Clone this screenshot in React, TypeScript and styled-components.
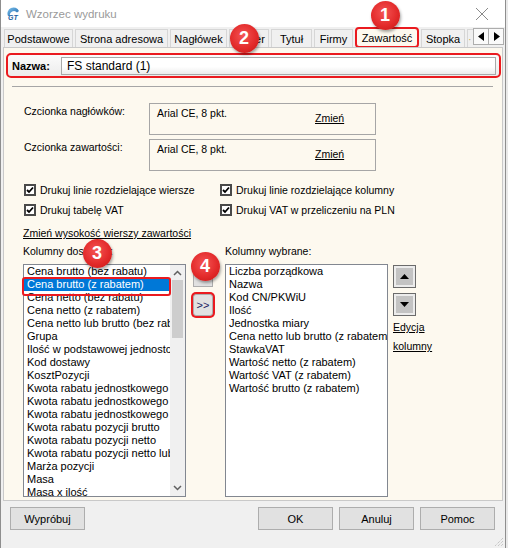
import React from 'react';
import styled, { createGlobalStyle, css } from 'styled-components';

const RED = '#ea1a1f';
const CREAM = '#fdf9ef';

const Global = createGlobalStyle`
  html, body { margin: 0; padding: 0; background: #e9e9e9; }
  body { font-family: "Liberation Sans", Arial, sans-serif; color: #000; }
  #root { width: 508px; height: 548px; overflow: hidden; }
`;

const Window = styled.div`
  position: relative;
  width: 504px;
  height: 548px;
  background: #f0f0f0;
  border-left: 1px solid #8e8e8e;
  border-right: 1px solid #8e8e8e;
  display: flex;
  flex-direction: column;
  overflow: hidden;
`;

const TitleBar = styled.div`
  height: 27px;
  flex: none;
  background: #fff;
  display: flex;
  align-items: center;
  padding-left: 5px;
`;

const Title = styled.span`
  margin-left: 5px;
  font-size: 11.5px;
  color: #9a9a9a;
  flex: 1;
`;

const CloseBtn = styled.div`
  width: 46px;
  height: 27px;
  display: flex;
  align-items: center;
  justify-content: center;
`;

const TabStrip = styled.div`
  height: 20px;
  flex: none;
  display: flex;
  align-items: flex-end;
  padding-left: 3px;
  position: relative;
  overflow: hidden;
`;

const Tab = styled.div<{ $w: number; $active?: boolean; $last?: boolean }>`
  box-sizing: border-box;
  width: ${p => p.$w}px;
  height: 18px;
  margin-right: ${p => (p.$last ? 0 : 2)}px;
  flex: none;
  display: flex;
  align-items: center;
  justify-content: ${p => (p.$last ? 'flex-start' : 'center')};
  font-size: 11px;
  border: 1px solid #d6d6d6;
  border-bottom: none;
  border-right: ${p => (p.$last ? 'none' : '1px solid #d6d6d6')};
  background: #f0f0f0;
  white-space: nowrap;
  overflow: hidden;
  color: ${p => (p.$last ? '#c8b060' : '#000')};
  ${p => p.$active && css`
    height: 21px;
    border: 2px solid ${RED};
    border-radius: 4px;
    background: ${CREAM};
    position: relative;
    z-index: 2;
    margin-bottom: -1px;
  `}
`;

const TabArrows = styled.div`
  flex: none;
  margin-left: auto;
  margin-right: 1px;
  margin-bottom: 2px;
  display: flex;
  background: #f0f0f0;
  position: relative;
  z-index: 1;
`;

const ArrowBtn = styled.div`
  width: 16px;
  height: 17px;
  box-sizing: border-box;
  border: 1px solid #adadad;
  margin-left: -1px;
  background: #fafafa;
  display: flex;
  align-items: center;
  justify-content: center;
`;

const Panel = styled.div`
  flex: 1;
  margin: 0 2px 0 2px;
  border: 1px solid #c9c9c9;
  background: ${CREAM};
  display: flex;
  flex-direction: column;
  min-height: 0;
`;

const NameGroup = styled.div`
  margin: 5px 1px 0 2px;
  height: 25px;
  box-sizing: border-box;
  border: 2px solid ${RED};
  border-radius: 5px;
  background: linear-gradient(#fbfbfb, #ececec);
  display: flex;
  align-items: center;
  padding: 0 3px 0 4px;
`;

const NameLabel = styled.span`
  font-weight: bold;
  font-size: 11px;
  width: 49px;
  flex: none;
`;

const NameInput = styled.div`
  flex: 1;
  height: 18px;
  box-sizing: border-box;
  border: 1px solid #a9a9a9;
  background: linear-gradient(#ffffff 55%, #ececec);
  font-size: 12px;
  display: flex;
  align-items: center;
  padding-left: 5px;
`;

const Separator = styled.div`
  margin: 8px 9px 0 8px;
  height: 1px;
  background: #a6a6a6;
`;

const FontRow = styled.div<{ $top: number }>`
  margin-top: ${p => p.$top}px;
  display: grid;
  grid-template-columns: 125px 227px;
  padding-left: 20px;
`;

const Label = styled.span`
  font-size: 10.5px;
  line-height: 13px;
`;

const FontLabel = styled(Label)`
  padding-top: 2px;
`;

const FontBox = styled.div`
  height: 32px;
  box-sizing: border-box;
  border: 1px solid #a6a6a6;
  display: grid;
  grid-template-columns: 158px 1fr;
  padding: 3px 0 0 7px;
  font-size: 10.5px;
  line-height: 13px;
`;

const LinkText = styled.span<{ $top?: number }>`
  text-decoration: underline;
  font-size: 10.5px;
  line-height: 13px;
  margin-top: ${p => p.$top ?? 0}px;
  display: inline-block;
`;

const CheckGrid = styled.div`
  margin-top: 13px;
  padding-left: 20px;
  display: grid;
  grid-template-columns: 196px 1fr;
  row-gap: 8px;
`;

const CheckItem = styled.div`
  display: flex;
  align-items: center;
  gap: 4px;
  height: 12px;
  font-size: 10.5px;
`;

const Box = styled.span`
  width: 12px;
  height: 12px;
  box-sizing: border-box;
  border: 2px solid #4a4a4a;
  background: #fff;
  display: inline-flex;
  align-items: center;
  justify-content: center;
  flex: none;
`;

const LinkRow = styled.div`
  margin-top: 7px;
  padding-left: 19px;
`;

const Columns = styled.div`
  margin-top: 4px;
  padding-left: 19px;
  display: grid;
  grid-template-columns: 163px 39px 163px 1fr;
  grid-template-rows: 13px 233px;
  row-gap: 6px;
`;

const ColLabel = styled(Label)``;

const ListFrame = styled.div`
  position: relative;
  box-sizing: border-box;
  border: 1px solid #828790;
  background: #fff;
  display: flex;
`;

const Items = styled.div`
  flex: 1;
  min-width: 0;
  overflow: hidden;
`;

const Item = styled.div<{ $sel?: boolean }>`
  height: 13px;
  line-height: 13px;
  font-size: 11px;
  padding-left: 3px;
  white-space: nowrap;
  overflow: hidden;
  ${p => p.$sel && css`
    background: #0078d7;
    color: #fff;
  `}
`;

const ScrollBar = styled.div`
  width: 15px;
  flex: none;
  background: #f0f0f0;
  display: flex;
  flex-direction: column;
  align-items: center;
`;

const ScrollArrow = styled.div`
  height: 16px;
  width: 15px;
  display: flex;
  align-items: center;
  justify-content: center;
  flex: none;
`;

const Thumb = styled.div`
  width: 11px;
  height: 58px;
  background: #cdcdcd;
  margin-top: -1px;
`;

const ScrollFill = styled.div`
  flex: 1;
`;

const SelOutline = styled.div`
  position: absolute;
  left: -2px;
  top: 12px;
  width: 145px;
  height: 15px;
  border: 2px solid ${RED};
  border-radius: 3px;
  pointer-events: none;
`;

const MidCol = styled.div`
  padding: 1px 0 0 7px;
  display: flex;
  flex-direction: column;
  gap: 7px;
`;

const SmallBtn = styled.div<{ $outlined?: boolean }>`
  width: 20px;
  height: 22px;
  box-sizing: border-box;
  border: 1px solid #adadad;
  background: #e1e1e1;
  font-size: 11px;
  display: flex;
  align-items: center;
  justify-content: center;
  color: #1a1a60;
  ${p => p.$outlined && css`
    border-radius: 3px;
    box-shadow: 0 0 0 2px ${RED};
  `}
`;

const SideCol = styled.div`
  padding: 1px 0 0 5px;
  display: flex;
  flex-direction: column;
  align-items: flex-start;
`;

const MoveBtn = styled.div<{ $gap?: number }>`
  width: 23px;
  height: 23px;
  box-sizing: border-box;
  border: 1px solid #6b6b6b;
  background: #c3c3c3;
  box-shadow: inset 0 0 0 2px #ececec;
  display: flex;
  align-items: center;
  justify-content: center;
  margin-top: ${p => p.$gap ?? 0}px;
`;

const Footer = styled.div`
  height: 41px;
  flex: none;
  display: flex;
  align-items: flex-start;
  padding: 6px 0 0 9px;
  gap: 6px;
  position: relative;
`;

const Button = styled.div<{ $push?: boolean }>`
  width: 75px;
  height: 23px;
  box-sizing: border-box;
  border: 1px solid #adadad;
  background: #e1e1e1;
  font-size: 11px;
  display: flex;
  align-items: center;
  justify-content: center;
  ${p => p.$push && css`margin-left: 167px;`}
`;

const Grip = styled.svg`
  position: absolute;
  right: 1px;
  bottom: 1px;
`;

const Badge = styled.div`
  position: absolute;
  width: 29px;
  height: 29px;
  margin: -14.5px 0 0 -14.5px;
  border-radius: 50%;
  background: radial-gradient(circle at 45% 40%, #f45454 0%, #e32b2b 55%, #c41414 100%);
  box-shadow: 1px 2px 3px rgba(0, 0, 0, 0.35);
  color: #fff;
  font-weight: bold;
  font-size: 18px;
  display: flex;
  align-items: center;
  justify-content: center;
  z-index: 10;
`;

const Check = () => (
  <svg width="8" height="8" viewBox="0 0 8 8">
    <path d="M1 4 L3 6 L7 1.5" fill="none" stroke="#000" strokeWidth="1.8" />
  </svg>
);

const CheckBox = ({ label }: { label: string }) => (
  <CheckItem>
    <Box><Check /></Box>
    <span>{label}</span>
  </CheckItem>
);

const tabs = [
  { label: 'Podstawowe', w: 69 },
  { label: 'Strona adresowa', w: 93 },
  { label: 'Nagłówek', w: 57 },
  { label: 'Papier', w: 40 },
  { label: 'Tytuł', w: 41 },
  { label: 'Firmy', w: 39 },
  { label: 'Zawartość', w: 64, active: true },
  { label: 'Stopka', w: 44 },
];

const available = [
  'Cena brutto (bez rabatu)',
  'Cena brutto (z rabatem)',
  'Cena netto (bez rabatu)',
  'Cena netto (z rabatem)',
  'Cena netto lub brutto (bez rabatu)',
  'Grupa',
  'Ilość w podstawowej jednostce',
  'Kod dostawy',
  'KosztPozycji',
  'Kwota rabatu jednostkowego brutto',
  'Kwota rabatu jednostkowego netto',
  'Kwota rabatu jednostkowego netto lub brutto',
  'Kwota rabatu pozycji brutto',
  'Kwota rabatu pozycji netto',
  'Kwota rabatu pozycji netto lub brutto',
  'Marża pozycji',
  'Masa',
  'Masa x ilość',
];

const chosen = [
  'Liczba porządkowa',
  'Nazwa',
  'Kod CN/PKWiU',
  'Ilość',
  'Jednostka miary',
  'Cena netto lub brutto (z rabatem)',
  'StawkaVAT',
  'Wartość netto (z rabatem)',
  'Wartość VAT (z rabatem)',
  'Wartość brutto (z rabatem)',
];

const Logo = () => (
  <svg width="15" height="14" viewBox="0 0 15 14">
    <defs>
      <linearGradient id="lg" x1="0" y1="0" x2="1" y2="1">
        <stop offset="0" stopColor="#7fc3ee" />
        <stop offset="1" stopColor="#1662a8" />
      </linearGradient>
    </defs>
    <path d="M2 9 A6 6 0 0 1 13 4 L11 5.5 A4 4 0 0 0 4 9 Z" fill="url(#lg)" />
    <text x="2" y="13" fontSize="7" fontWeight="bold" fontStyle="italic" fill="#1b5e9e" fontFamily="Liberation Sans, sans-serif">GT</text>
  </svg>
);

export default function App() {
  return (
    <>
      <Global />
      <Window>
        <TitleBar>
          <Logo />
          <Title>Wzorzec wydruku</Title>
          <CloseBtn>
            <svg width="14" height="14" viewBox="0 0 14 14">
              <path d="M1 1 L13 13 M13 1 L1 13" stroke="#8a8a8a" strokeWidth="1" />
            </svg>
          </CloseBtn>
        </TitleBar>

        <TabStrip>
          {tabs.map(t => (
            <Tab key={t.label} $w={t.w} $active={t.active}>{t.label}</Tab>
          ))}
          <Tab $w={6} $last>·</Tab>
          <TabArrows>
            <ArrowBtn>
              <svg width="7" height="9" viewBox="0 0 7 9"><path d="M6 0 L6 9 L0 4.5 Z" fill="#000" /></svg>
            </ArrowBtn>
            <ArrowBtn>
              <svg width="7" height="9" viewBox="0 0 7 9"><path d="M1 0 L1 9 L7 4.5 Z" fill="#000" /></svg>
            </ArrowBtn>
          </TabArrows>
        </TabStrip>

        <Panel>
          <NameGroup>
            <NameLabel>Nazwa:</NameLabel>
            <NameInput>FS standard (1)</NameInput>
          </NameGroup>
          <Separator />

          <FontRow $top={16}>
            <FontLabel>Czcionka nagłówków:</FontLabel>
            <FontBox>
              <span>Arial CE, 8 pkt.</span>
              <LinkText $top={5}>Zmień</LinkText>
            </FontBox>
          </FontRow>
          <FontRow $top={4}>
            <FontLabel>Czcionka zawartości:</FontLabel>
            <FontBox>
              <span>Arial CE, 8 pkt.</span>
              <LinkText $top={5}>Zmień</LinkText>
            </FontBox>
          </FontRow>

          <CheckGrid>
            <CheckBox label="Drukuj linie rozdzielające wiersze" />
            <CheckBox label="Drukuj linie rozdzielające kolumny" />
            <CheckBox label="Drukuj tabelę VAT" />
            <CheckBox label="Drukuj VAT w przeliczeniu na PLN" />
          </CheckGrid>

          <LinkRow>
            <LinkText>Zmień wysokość wierszy zawartości</LinkText>
          </LinkRow>

          <Columns>
            <ColLabel>Kolumny dostępne:</ColLabel>
            <span />
            <ColLabel>Kolumny wybrane:</ColLabel>
            <span />

            <ListFrame>
              <Items>
                {available.map((it, i) => (
                  <Item key={it} $sel={i === 1}>{it}</Item>
                ))}
              </Items>
              <ScrollBar>
                <ScrollArrow>
                  <svg width="9" height="6" viewBox="0 0 9 6"><path d="M1 5 L4.5 1.5 L8 5" fill="none" stroke="#606060" strokeWidth="1.5" /></svg>
                </ScrollArrow>
                <Thumb />
                <ScrollFill />
                <ScrollArrow>
                  <svg width="9" height="6" viewBox="0 0 9 6"><path d="M1 1 L4.5 4.5 L8 1" fill="none" stroke="#606060" strokeWidth="1.5" /></svg>
                </ScrollArrow>
              </ScrollBar>
              <SelOutline />
            </ListFrame>

            <MidCol>
              <SmallBtn>&lt;&lt;</SmallBtn>
              <SmallBtn $outlined>&gt;&gt;</SmallBtn>
            </MidCol>

            <ListFrame>
              <Items>
                {chosen.map(it => (
                  <Item key={it}>{it}</Item>
                ))}
              </Items>
            </ListFrame>

            <SideCol>
              <MoveBtn>
                <svg width="9" height="5" viewBox="0 0 9 5"><path d="M0 5 L4.5 0 L9 5 Z" fill="#000" /></svg>
              </MoveBtn>
              <MoveBtn $gap={5}>
                <svg width="9" height="5" viewBox="0 0 9 5"><path d="M0 0 L4.5 5 L9 0 Z" fill="#000" /></svg>
              </MoveBtn>
              <LinkText $top={5}>Edycja</LinkText>
              <LinkText $top={6}>kolumny</LinkText>
            </SideCol>
          </Columns>
        </Panel>

        <Footer>
          <Button>Wypróbuj</Button>
          <Button $push>OK</Button>
          <Button>Anuluj</Button>
          <Button>Pomoc</Button>
          <Grip width="11" height="11" viewBox="0 0 11 11">
            <path d="M10 2 L2 10 M10 5 L5 10 M10 8 L8 10" stroke="#b5b5b5" strokeWidth="1" strokeDasharray="1 1" />
          </Grip>
        </Footer>

        <Badge style={{ left: 384, top: 15 }}>1</Badge>
        <Badge style={{ left: 243, top: 38 }}>2</Badge>
        <Badge style={{ left: 96, top: 253 }}>3</Badge>
        <Badge style={{ left: 204, top: 266 }}>4</Badge>
      </Window>
    </>
  );
}
